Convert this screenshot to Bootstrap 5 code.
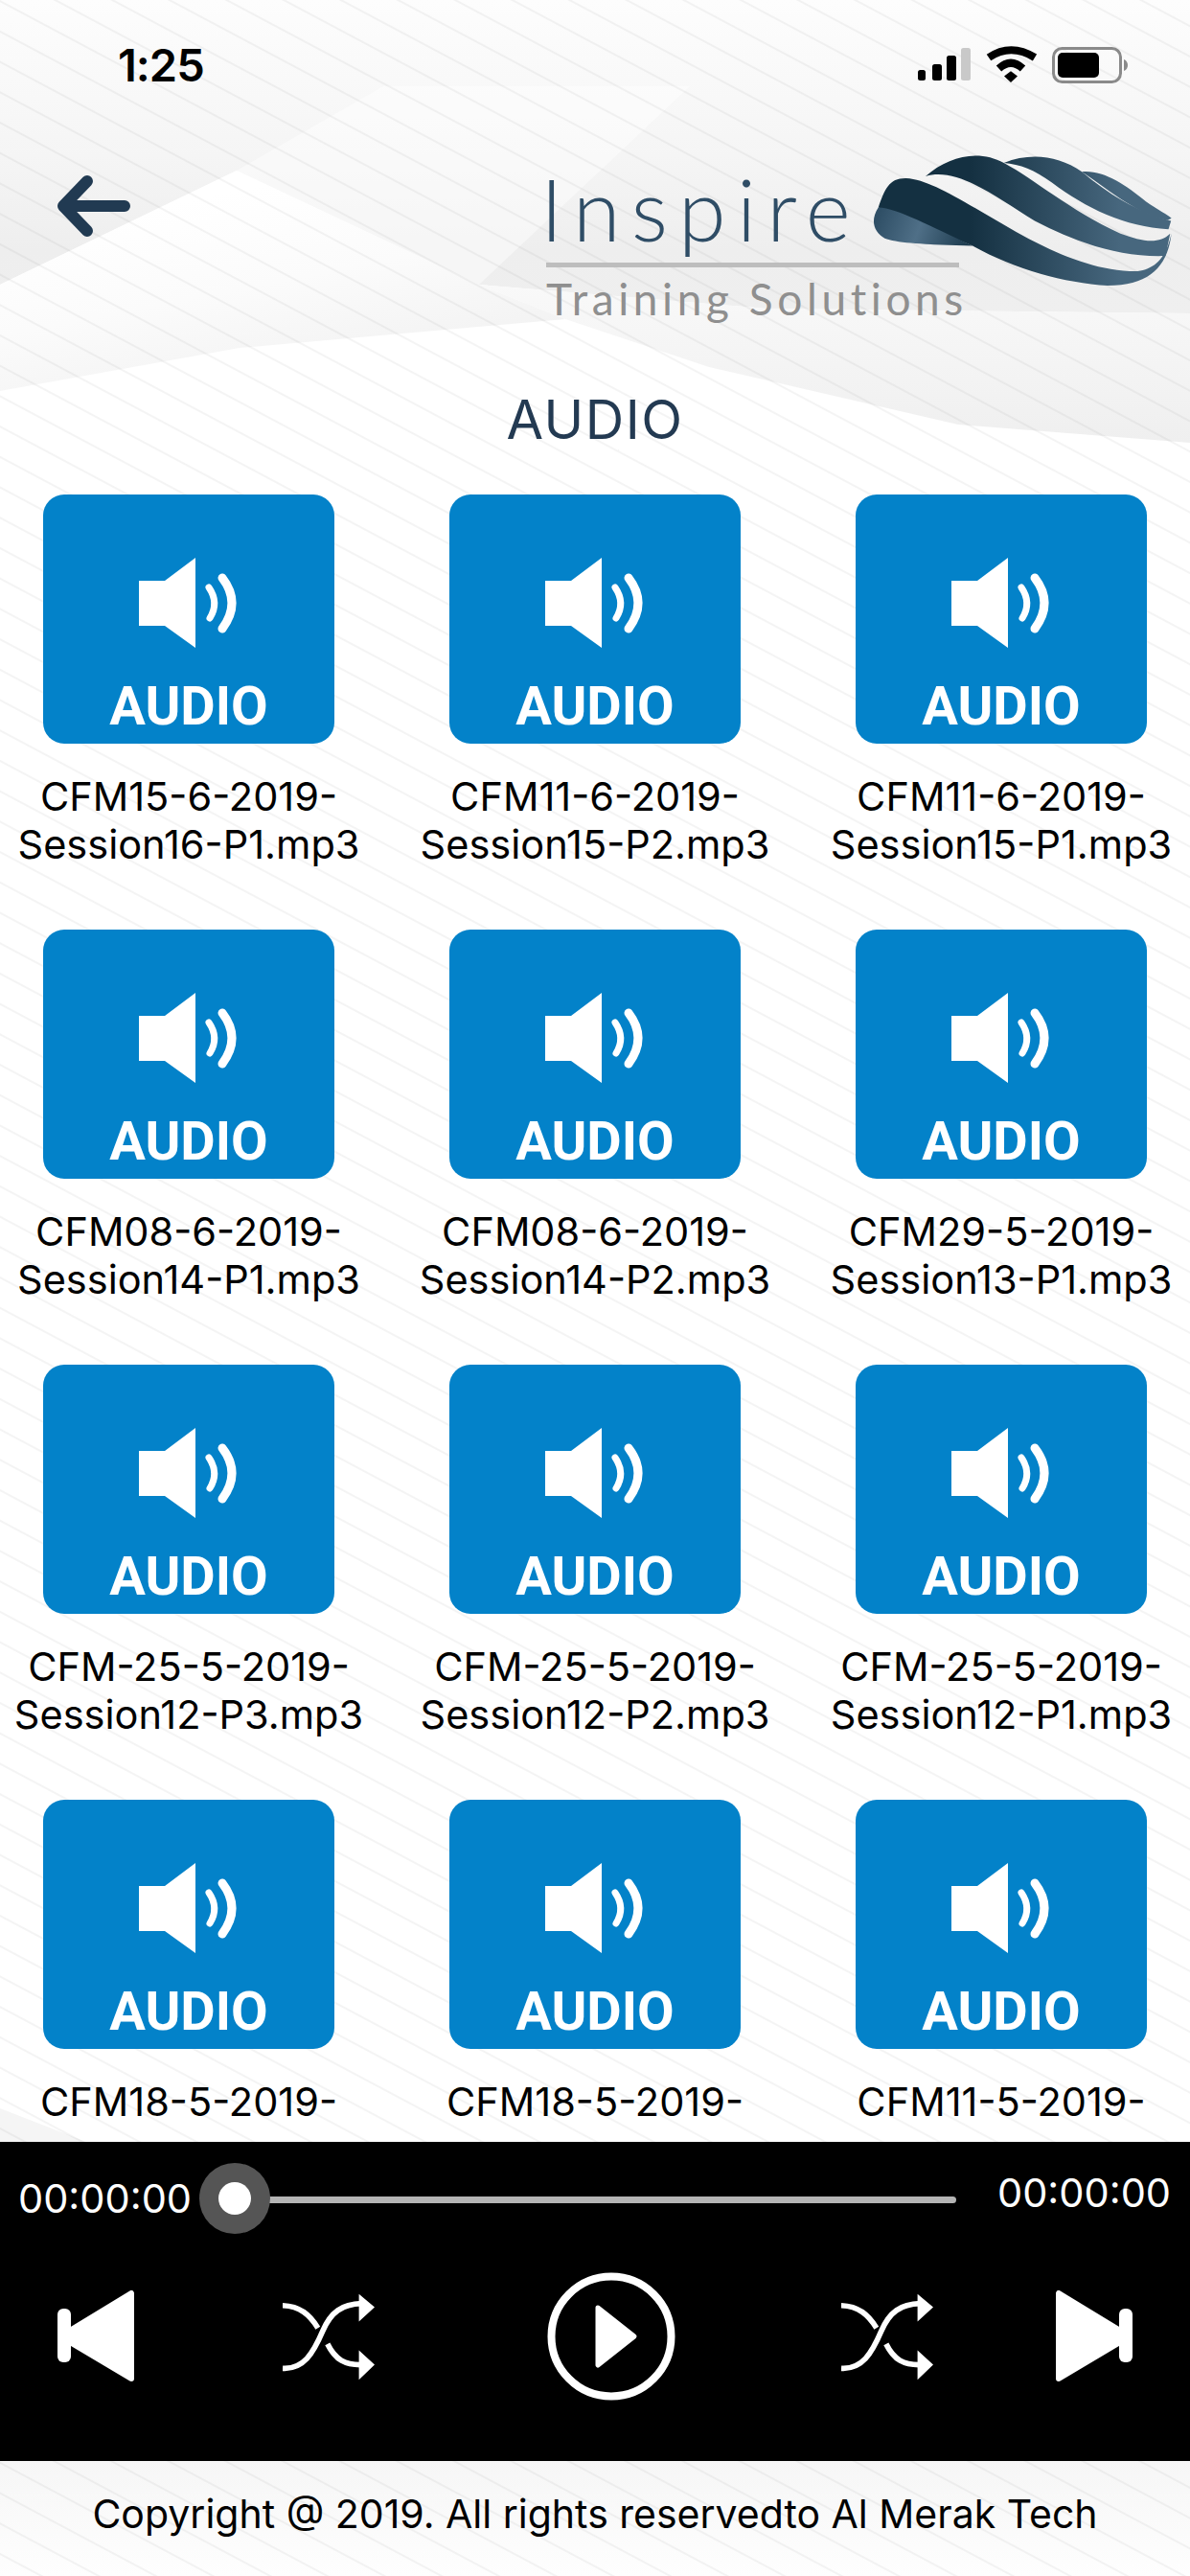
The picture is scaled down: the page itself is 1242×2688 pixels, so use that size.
<!DOCTYPE html>
<html lang="en">
<head>
  <meta charset="UTF-8">
  <meta name="viewport" content="width=device-width, initial-scale=1.0">
  <title>Inspire - Audio</title>
  <link href="https://cdn.jsdelivr.net/npm/bootstrap@5.3.0/dist/css/bootstrap.min.css" rel="stylesheet">
  <style>
    html, body { height: 2688px; }
    body { position: relative; overflow: hidden; background: #fff; font-family: Inter, "Liberation Sans", sans-serif; color: #000; }
    .backdrop { position: absolute; top: 0; left: 0; z-index: -1; }
    .screen { height: 2688px; }

    .status-row { height: 110px; padding: 34px 65px 0 123px; }
    .status-time { font-size: 47px; font-weight: 600; line-height: 68px; letter-spacing: -1px; }
    .status-icons { margin-top: 14px; }

    .top-row { height: 270px; padding-left: 59px; }
    .back-arrow { margin-top: 73px; }
    .brand { margin-left: 433px; margin-top: 50px; }
    .brand-text { width: 431px; font-family: Lato, "Open Sans", sans-serif; font-weight: 300; }
    .brand-name { color: #2f4d66; font-size: 90px; line-height: 90px; letter-spacing: 11.2px; margin: 12px 0 0 -6px; white-space: nowrap; }
    .brand-rule { height: 5px; background: #bdbdbd; margin-top: 12px; }
    .brand-sub { color: #8f8f8f; font-weight: 400; font-size: 46px; line-height: 54px; letter-spacing: 4.6px; margin-top: 6px; white-space: nowrap; }
    .brand-mark { margin-left: -91px; }

    .page-title { height: 136px; padding-top: 27px; color: #233a52; font-size: 56px; line-height: 62px; letter-spacing: 1.5px; }

    .file-list { min-height: 0; overflow: hidden; }
    .file-grid { width: 1272px; margin-left: -15px; }
    .file-item { height: 454px; }
    .file-tile { width: 304px; height: 260px; background: #0382c9; border-radius: 22px; color: #fff; }
    .tile-speaker { margin-top: 66px; }
    .tile-label { font-family: Roboto, "Liberation Sans", sans-serif; font-weight: 700; font-size: 56px; line-height: 40px; margin-top: 41px; }
    .file-name { width: 400px; font-size: 41.5px; line-height: 50px; margin-top: 30px; }

    .player { height: 333px; margin-top: 18px; background: #000; color: #fff; }
    .time-row { height: 117px; padding: 0 20px 0 19px; }
    .time-text { font-size: 41.5px; line-height: 46px; }
    .time-end { margin-top: -12px; }
    .seek { height: 74px; margin: 0 43px 0 8px; position: relative; }
    .seek-track { position: absolute; left: 37px; right: 0; top: 35px; height: 7px; border-radius: 4px; background: #b4b4b4; }
    .seek-thumb { position: absolute; left: 0; top: 0; width: 74px; height: 74px; border-radius: 50%; background: #555; }
    .seek-thumb::after { content: ""; position: absolute; left: 20px; top: 20px; width: 34px; height: 34px; border-radius: 50%; background: #fff; }
    .controls { padding-left: 60px; padding-top: 19px; }
    .gap-a { margin-left: 154px; }
    .gap-b { margin-left: 179px; }
    .gap-c { margin-left: 173px; }
    .gap-d { margin-left: 126px; }
    .copyright { height: 120px; font-size: 41px; line-height: 110px; white-space: nowrap; }
  </style>
</head>
<body>
<svg class="backdrop" width="1242" height="2688" viewBox="0 0 1242 2688">
  <defs>
    <linearGradient id="topGrey" x1="0" y1="0" x2="0" y2="1">
      <stop offset="0" stop-color="#fdfdfd"/>
      <stop offset="0.5" stop-color="#f5f5f5"/>
      <stop offset="0.8" stop-color="#eeeeee"/>
      <stop offset="1" stop-color="#efefef"/>
    </linearGradient>
    <linearGradient id="peakFill" x1="0.2" y1="0.2" x2="0.6" y2="1">
      <stop offset="0" stop-color="#ffffff"/>
      <stop offset="0.45" stop-color="#fbfbfb"/>
      <stop offset="1" stop-color="#f1f1f1"/>
    </linearGradient>
    <linearGradient id="waveGrey" x1="0" y1="0" x2="0" y2="1">
      <stop offset="0" stop-color="#f9f9f9"/>
      <stop offset="1" stop-color="#efefef"/>
    </linearGradient>
    <linearGradient id="bottomGrey" x1="0" y1="0" x2="0" y2="1">
      <stop offset="0" stop-color="#f6f6f6"/>
      <stop offset="1" stop-color="#fefefe"/>
    </linearGradient>
    <pattern id="stripes" width="200" height="28" patternUnits="userSpaceOnUse" patternTransform="rotate(28)">
      <rect width="200" height="2" fill="#000" fill-opacity="0.045"/>
    </pattern>
  </defs>
  <rect width="1242" height="2688" fill="#fff"/>
  <path d="M0 0H1242V327L800 322 500 297 247 178 0 297Z" fill="url(#topGrey)"/>
  <path d="M247 178L400 90H720L500 297Z" fill="#fff" fill-opacity="0.45"/>
  <path d="M500 297L800 322 1242 327V462L1000 443 740 383 590 333Z" fill="url(#waveGrey)"/>
  <path d="M0 408L250 363 590 333 500 297 247 178 0 297Z" fill="url(#peakFill)"/>
  <path d="M0 2568H1242V2688H0Z" fill="url(#bottomGrey)"/>
  <path d="M0 2200L90 2235H0Z" fill="#f5f5f5"/>
  <rect width="1242" height="2688" fill="url(#stripes)"/>
</svg>

<div class="screen d-flex flex-column">
  <div class="status-row d-flex justify-content-between flex-shrink-0">
    <div class="status-time">1:25</div>
    <svg class="status-icons" width="220" height="40" viewBox="0 0 220 40">
      <rect x="1" y="25" width="8" height="11" rx="2.5"/>
      <rect x="16" y="19" width="10" height="17" rx="2.5"/>
      <rect x="31" y="10" width="10" height="26" rx="2.5"/>
      <rect x="46" y="2" width="10" height="34" rx="2.5" fill="#c9c9c9"/>
      <path d="M75 12Q98-3.500 123 12" fill="none" stroke="#000" stroke-width="8"/>
      <path d="M85.500 23.500Q98 12 110.500 23.500" fill="none" stroke="#000" stroke-width="8"/>
      <path d="M91 31.500L98 26.300 105 31.500 98 38Z"/>
      <rect x="142.500" y="2.500" width="70" height="35" rx="9" fill="none" stroke="#8a8a8a" stroke-width="3"/>
      <rect x="147" y="7" width="43" height="26" rx="5"/>
      <path d="M216 14C219 15 220 18 220 20S219 25 216 26Z" fill="#8a8a8a"/>
    </svg>
  </div>

  <div class="top-row d-flex flex-shrink-0">
    <svg class="back-arrow" width="78" height="66" viewBox="0 0 78 66" fill="none" stroke="#213a52" stroke-width="12" stroke-linecap="round" stroke-linejoin="round">
      <path d="M71 32H8M32 6L7 32 32 58"/>
    </svg>
    <div class="brand d-flex">
      <div class="brand-text">
        <div class="brand-name">Inspire</div>
        <div class="brand-rule"></div>
        <div class="brand-sub">Training Solutions</div>
      </div>
      <svg class="brand-mark" width="314" height="139" viewBox="820 88 702 418" preserveAspectRatio="none">
        <defs>
          <linearGradient id="bandFill" gradientUnits="userSpaceOnUse" x1="1050" y1="0" x2="1400" y2="0">
            <stop offset="0" stop-color="#143041"/>
            <stop offset="1" stop-color="#47677e"/>
          </linearGradient>
          <linearGradient id="foldFill" gradientUnits="userSpaceOnUse" x1="830" y1="300" x2="1050" y2="360">
            <stop offset="0" stop-color="#2f4f66"/>
            <stop offset="0.45" stop-color="#4f6f87"/>
            <stop offset="1" stop-color="#1c3a4d"/>
          </linearGradient>
        </defs>
        <path d="M1310 146C1360 140 1410 185 1460 240 1490 268 1510 280 1519 292L1510 298C1440 280 1380 210 1310 146Z" fill="url(#bandFill)"/>
        <path d="M1128 118C1190 85 1255 95 1310 146 1350 190 1420 265 1518 300L1512 326C1410 320 1320 260 1240 180 1200 140 1165 122 1128 118Z" fill="url(#bandFill)"/>
        <path d="M945 160C1000 95 1070 75 1128 118 1200 170 1280 265 1400 340 1450 365 1490 375 1516 340L1505 410C1400 415 1300 370 1200 300 1110 225 1020 130 945 160Z" fill="url(#bandFill)"/>
        <path d="M835 258C850 200 860 165 900 166 950 170 1010 220 1100 290 1200 370 1320 460 1440 458 1480 450 1505 420 1519 340 1510 440 1470 503 1370 503 1270 495 1150 450 1055 378Z" fill="url(#bandFill)"/>
        <path d="M835 258C880 260 960 320 1055 378 950 375 880 370 850 355 825 335 815 300 835 258Z" fill="url(#foldFill)"/>
      </svg>
    </div>
  </div>

  <div class="page-title text-center flex-shrink-0">AUDIO</div>

  <div class="file-list flex-grow-1">
    <div class="row row-cols-3 g-0 file-grid" id="file-grid"></div>
  </div>

  <div class="player d-flex flex-column flex-shrink-0">
    <div class="time-row d-flex align-items-center">
      <div class="time-text">00:00:00</div>
      <div class="seek flex-grow-1">
        <div class="seek-track"></div>
        <div class="seek-thumb"></div>
      </div>
      <div class="time-text time-end">00:00:00</div>
    </div>
    <div class="controls d-flex align-items-center">
      <svg width="81" height="96" viewBox="0 0 81 96" fill="#fff">
        <rect x="0" y="19" width="14" height="56" rx="6"/>
        <polygon points="3,48 77,3 77,92" stroke="#fff" stroke-width="6" stroke-linejoin="round"/>
      </svg>
      <svg class="gap-a" width="97" height="91" viewBox="465 572 290 272" fill="#fff">
        <path d="M465 806C530 810 560 760 590 690 615 630 650 606 712 604M465 610C520 612 550 640 575 680M605 730C630 780 660 796 712 795" fill="none" stroke="#fff" stroke-width="17"/>
        <path d="M703 574L752 615 703 660ZM703 750L752 795 703 842Z"/>
      </svg>
      <svg class="gap-b" width="134" height="134" viewBox="0 0 134 134" fill="#fff">
        <circle cx="67" cy="67" r="62.500" fill="none" stroke="#fff" stroke-width="8"/>
        <polygon points="53,37 91,67 53,97" stroke="#fff" stroke-width="5" stroke-linejoin="round"/>
      </svg>
      <svg class="gap-c" width="97" height="91" viewBox="465 572 290 272" fill="#fff">
        <path d="M465 806C530 810 560 760 590 690 615 630 650 606 712 604M465 610C520 612 550 640 575 680M605 730C630 780 660 796 712 795" fill="none" stroke="#fff" stroke-width="17"/>
        <path d="M703 574L752 615 703 660ZM703 750L752 795 703 842Z"/>
      </svg>
      <svg class="gap-d" width="81" height="96" viewBox="0 0 81 96" fill="#fff">
        <rect x="67" y="19" width="14" height="56" rx="6"/>
        <polygon points="78,48 4,3 4,92" stroke="#fff" stroke-width="6" stroke-linejoin="round"/>
      </svg>
    </div>
  </div>

  <div class="copyright text-center flex-shrink-0">Copyright @ 2019. All rights reservedto Al Merak Tech</div>
</div>

<script src="https://cdn.jsdelivr.net/npm/bootstrap@5.3.0/dist/js/bootstrap.bundle.min.js"></script>
<script>
  const files = [
    "CFM15-6-2019-Session16-P1.mp3", "CFM11-6-2019-Session15-P2.mp3", "CFM11-6-2019-Session15-P1.mp3",
    "CFM08-6-2019-Session14-P1.mp3", "CFM08-6-2019-Session14-P2.mp3", "CFM29-5-2019-Session13-P1.mp3",
    "CFM-25-5-2019-Session12-P3.mp3", "CFM-25-5-2019-Session12-P2.mp3", "CFM-25-5-2019-Session12-P1.mp3",
    "CFM18-5-2019-", "CFM18-5-2019-", "CFM11-5-2019-"
  ];

  const speaker = `
    <svg class="tile-speaker" width="304" height="94" viewBox="0 66 304 94" fill="#fff">
      <path d="M100 90H127L159 66V160L127 137H100Z"/>
      <path d="M173 97Q184 113 174 129" fill="none" stroke="#fff" stroke-width="7" stroke-linecap="round"/>
      <path d="M187 87Q207 113 187 140" fill="none" stroke="#fff" stroke-width="9" stroke-linecap="round"/>
    </svg>`;

  document.getElementById("file-grid").innerHTML = files.map(name => `
    <div class="col file-item d-flex flex-column align-items-center text-center">
      <div class="file-tile d-flex flex-column align-items-center">
        ${speaker}
        <div class="tile-label">AUDIO</div>
      </div>
      <div class="file-name">${name}</div>
    </div>`).join("");
</script>
</body>
</html>
